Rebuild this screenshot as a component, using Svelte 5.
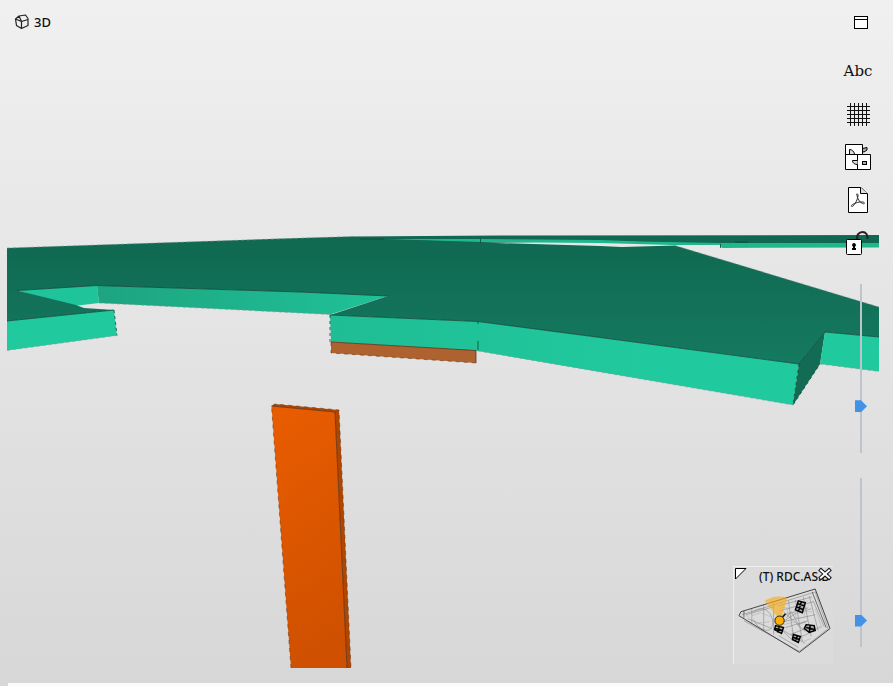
<script>
  let cut = $state(26);
  let level = $state(13);
</script>

<main class="viewer">
  <svg class="scene" viewBox="0 0 893 686" preserveAspectRatio="xMidYMid slice" role="img" aria-label="3D model">
    <defs>
      <linearGradient id="slab" gradientUnits="userSpaceOnUse" x1="0" y1="236" x2="0" y2="364">
        <stop offset="0" stop-color="#106850" />
        <stop offset="1" stop-color="#147a60" />
      </linearGradient>
      <linearGradient id="edge" gradientUnits="userSpaceOnUse" x1="97" y1="0" x2="388" y2="0">
        <stop offset="0" stop-color="#1da480" />
        <stop offset="1" stop-color="#20c298" />
      </linearGradient>
      <linearGradient id="front" gradientUnits="userSpaceOnUse" x1="330" y1="0" x2="640" y2="0">
        <stop offset="0" stop-color="#1fbd94" />
        <stop offset="1" stop-color="#21c99e" />
      </linearGradient>
      <linearGradient id="column" x1="0.3" y1="0" x2="0.5" y2="1">
        <stop offset="0" stop-color="#e85c00" />
        <stop offset="1" stop-color="#ce5000" />
      </linearGradient>
    </defs>
    <g stroke-linejoin="round">
      <path fill="#106850" d="M352 236.500L500 235.500L879 235V244H720L600 241L480 243H360Z" />
      <path fill="#20b78f" d="M384 239L480 239L540 239.500L600 240L640 241.500L720 243L879 243V247.500L722 248L720 245L672 245L600 243L480 242Z" />
      <path fill="#20c49a" d="M17 290.500L97 285.500L99 303L74 306Z" />
      <path fill="url(#edge)" d="M97 285.500L300 292L388 296L330 314.500L99 303Z" />
      <path fill="url(#slab)" d="M7 248L300 238L352 236.500L360 238.500L480 242.500L600 246L622 247L675 245.500L879 307V337L825 332L799 364L600 337.500L478 321.500L330 315L388 296L300 292L97 285.500L17 290.500L76 305L84 308L114 310L7 321Z" />
      <path fill="#21c99e" d="M7 321L114 310L117 335.500L7 350.500Z" />
      <path fill="url(#front)" d="M330 315L478 321.500L799 364L793 405L600 372L478 351L331 342Z" />
      <path fill="#126c54" d="M799 364L825 332L820 364L793 405Z" />
      <path fill="#21c99e" d="M825 332L879 337V371.500L820 364Z" />
      <path fill="#ae6230" d="M331 342L476 350.500V363L331 353Z" />
      <path fill="url(#column)" d="M271.500 406L335 412L347 668H291Z" />
      <path fill="#b04600" d="M271.500 406L275 404L339 410L351 668H347L335 412Z" />
    </g>
    <g fill="none" stroke="#0b4636" stroke-width="0.800">
      <path d="M7 321L114 310M17 290.500L97 285.500L300 292L388 296M330 315L478 321.500L600 337.500L799 364L825 332L879 337M478 321V324M478 341V350M480.500 239V243M720.500 244V248M360 239H384M735 242H748" />
      <path stroke-dasharray="3 3" d="M114 310L117 335.500M330 315V342M799 364L793 405L820 364" />
    </g>
    <g fill="none" stroke="#5d3217" stroke-width="0.800">
      <path d="M331 342L476 350.500V363M271.500 406L335 412L347 668" />
      <path stroke-opacity="0.700" stroke-dasharray="4 4" d="M331 342V353L476 363M291 668L271.500 406L275 404L339 410L351 668" />
    </g>
    <path fill="none" stroke="#8b9792" stroke-dasharray="3 3" stroke-width="0.600" d="M7 248L352 236.500M675 245.500L879 307M7 350.500L117 335.500M99 303L330 314.500M478 351L600 372L793 405M820 364L879 371.500" />
  </svg>

  <header class="bar">
    <h1 class="title">
      <svg width="16" height="16" viewBox="0 0 16 16" fill="none" stroke="#222" stroke-width="1.200" stroke-linejoin="round" aria-hidden="true">
        <path d="M1.500 5L5 2L11.500 1L14 4.500V11.500L7.500 14.500L2.500 11.500ZM5 2L7.500 7.500L14 5.500M7.500 7.500V14.500M1.500 5L7.500 7.500" />
      </svg>
      3D
    </h1>
    <button class="tool window" aria-label="Maximise view">
      <svg width="14" height="13" viewBox="0 0 14 13" aria-hidden="true">
        <rect x="0.500" y="0.500" width="13" height="12" fill="#fff" stroke="#000" /><path d="M1 3.500H13" stroke="#000" />
      </svg>
    </button>
  </header>

  <aside class="rail">
    <nav class="tools" aria-label="View tools">
      <button class="tool abc">Abc</button>
      <button class="tool" aria-label="Grid">
        <svg width="24" height="24" viewBox="0 0 24 24" aria-hidden="true">
          <path d="M1 4.500H24M1 8.500H24M1 12.500H24M1 16.500H24M1 20.500H24M4.500 1V24M8.500 1V24M12.500 1V24M16.500 1V24M20.500 1V24" stroke="#111" />
        </svg>
      </button>
      <button class="tool" aria-label="Views">
        <svg width="26" height="26" viewBox="0 0 26 26" stroke="#000" aria-hidden="true">
          <path fill="#aaa" d="M17.500 7.500V4.500L22 3.500V6L19 8Z" />
          <path fill="#fff" d="M0.500 0.500H17.500V10.500H25.500V25.500H0.500Z" />
          <path fill="none" d="M0.500 10.500H17.500M12.500 10.500V25.500" />
          <path fill="#ddd" d="M4.500 10V5.500C7 5.500 9 7.500 9.500 10M12.500 16.500H7.500C7.500 19 9.500 20.500 12.500 20.500" />
          <rect x="17.500" y="17.500" width="4" height="3" fill="#aaa" />
        </svg>
      </button>
      <button class="tool" aria-label="Export PDF">
        <svg width="20" height="26" viewBox="0 0 20 26" fill="none" stroke="#000" aria-hidden="true">
          <path fill="#fff" d="M0.500 0.500H13L19.500 7V25.500H0.500Z" /><path fill="#ddd" d="M12.500 0.500V6.500H19.500" />
          <path stroke="#333" d="M9 8C7.500 6.500 10.500 6 10 9C9.500 13 7 17 5 19C3.500 20.500 2.500 18.500 4.500 17.500C7 16 11 14.500 15 15C17.500 15.500 16.500 17.500 14.500 16.500C11.500 15.500 9 11 9 8Z" />
        </svg>
      </button>
      <button class="tool" aria-label="Unlock view">
        <svg width="24" height="26" viewBox="0 0 24 26" aria-hidden="true">
          <path fill="none" stroke="#222" stroke-width="2" d="M11.500 10C10 5 13 2 16.500 2C20 2 22 5 21.500 9" />
          <rect x="0.500" y="9.500" width="15" height="15" rx="1" fill="#fff" stroke="#000" />
          <path d="M8 13a2 2 0 0 1 1 3.700V18H10V20H6V18H7V16.700A2 2 0 0 1 8 13Z" />
        </svg>
      </button>
    </nav>
    <div class="sliders">
      <input type="range" min="0" max="100" bind:value={cut} aria-label="Field of view" />
      <input type="range" min="0" max="100" bind:value={level} aria-label="Camera height" />
    </div>
  </aside>

  <section class="minimap" aria-label="Plan overview">
    <div class="caption">
      <button class="corner" aria-label="Resize plan">
        <svg width="12" height="12" viewBox="0 0 12 12" aria-hidden="true"><path d="M0.500 0.500H11L0.500 11Z" fill="#fff" stroke="#000" /></svg>
      </button>
      <span>(T) RDC.AS.B</span>
      <button class="close" aria-label="Close plan">
        <svg width="14" height="14" viewBox="0 0 14 14" aria-hidden="true">
          <path d="M1.500 2L12.500 12M12.500 2L1.500 12" stroke="#111" stroke-width="4" /><path d="M2.200 2.700L11.800 11.300M11.800 2.700L2.200 11.300" stroke="#fff" stroke-width="2" />
        </svg>
      </button>
    </div>
    <svg class="plan" viewBox="0 0 100 76" fill="none" aria-hidden="true">
      <g stroke="#777" stroke-width="0.500">
        <path d="M8 28L82 5L95 42L66 65L10 34M18 22V37M30 18V44M40 16V48M20 25C30 16 43 29 38 41C34 48 22 40 20 33M12 28L40 20M14 32L38 42M45 19L79 10M46 24L80 15M48 29L75 21M50 35L82 28M52 41L75 34M57 48L80 39M45 49L65 61M50 44L72 57M55 14L60 50M62 13L69 55M70 10L78 50M76 9L85 44M80 14L91 40M50 25L72 45M48 36L62 27L78 22M53 31L58 25L65 38L73 35M44 39L57 52L71 49L88 40" />
        <path d="M48 21H54V26H62V31H71V25H79M43 29L50 38L62 35L67 42M58 44L70 55L78 52M18 29L27 26L37 30M21 37L36 35M64 17L75 14M82 22L89 42M10 25L15 31" stroke="#aaa" />
      </g>
      <path d="M5 29L7 25L82 2L97 42L66 66Z" stroke="#444" stroke-width="1" />
      <path d="M79 5L93 41M10 24V31" stroke="#555" stroke-width="0.800" />
      <g fill="#aaa" stroke="#000" stroke-width="1.500">
        <path d="M65 14L72 16L69 26L62 23ZM64 17L71 19M63 20L70 23M68 15L65 25" />
        <path d="M42 39L50 41L48 47L41 43ZM46 39L44 46M42 42L49 44" />
        <path d="M60 48L67 50L65 56L59 53ZM64 49L62 55M60 51L66 53" />
        <path d="M73 38L81 39L82 44L76 46L71 42ZM77 38L76 46M73 41L81 43" />
      </g>
      <path d="M31 14Q42 7 54 11L47 34Z" fill="#fbae17" fill-opacity="0.650" />
      <path d="M47 33L52 27" stroke="#111" stroke-width="1.500" />
      <circle cx="46" cy="34" r="4.700" fill="#ffae00" stroke="#222" />
    </svg>
  </section>
  <div class="status"></div>
</main>

<style>
  :global(body) { margin: 0; }
  .viewer {
    position: relative;
    box-sizing: border-box;
    display: flex;
    flex-direction: column;
    min-height: 100vh;
    overflow: hidden;
    background: linear-gradient(#f0f0f0, #d7d7d7);
    font-family: "Noto Sans", "Open Sans", sans-serif;
    color: #111;
  }
  .scene { position: absolute; inset: 0; width: 100%; height: 100%; }
  .bar, .rail { position: relative; }
  .bar {
    display: flex;
    justify-content: space-between;
    align-items: center;
    height: 44px;
    padding: 0 17px 0 14px;
  }
  .title {
    display: flex;
    align-items: center;
    gap: 4px;
    margin: 0;
    font-size: 13px;
    line-height: 18px;
    font-weight: 500;
  }
  button { padding: 0; border: 0; background: none; color: inherit; cursor: pointer; }
  svg { display: block; }
  .tool { display: flex; align-items: center; justify-content: center; width: 30px; height: 43px; }
  .rail { display: flex; flex-direction: column; align-items: flex-end; gap: 20px; padding-top: 5px; }
  .tools { display: flex; flex-direction: column; margin-right: 20px; }
  .abc { font: 15px/20px "DejaVu Serif", serif; }
  .sliders { display: flex; flex-direction: column; gap: 25px; margin-right: 26px; }
  input {
    appearance: none;
    writing-mode: vertical-lr;
    direction: rtl;
    width: 12px;
    height: 169px;
    margin: 0;
    background: linear-gradient(#bfc3cb, #bfc3cb) center / 2px 100% no-repeat;
  }
  input::-webkit-slider-thumb {
    appearance: none;
    width: 12px;
    height: 12px;
    background: #4392e6;
    clip-path: polygon(0 0, 50% 0, 100% 50%, 50% 100%, 0 100%);
  }
  .minimap {
    position: absolute;
    right: 60px;
    bottom: 22px;
    box-sizing: border-box;
    width: 100px;
    padding-bottom: 2px;
    overflow: hidden;
    border-top: 1px solid #eee;
    border-left: 1px solid #eee;
    background: #dbdbdb;
  }
  .caption { position: relative; display: flex; gap: 12px; height: 20px; }
  .caption span { font-size: 12px; line-height: 20px; font-weight: 500; white-space: nowrap; }
  .corner { width: 12px; height: 14px; flex: none; margin-left: 1px; }
  .close { position: absolute; right: 1px; top: 0; }
  .plan { width: 100%; }
  .status { position: absolute; left: 8px; right: 0; bottom: 0; height: 3px; background: #fbfbfb; }
</style>
